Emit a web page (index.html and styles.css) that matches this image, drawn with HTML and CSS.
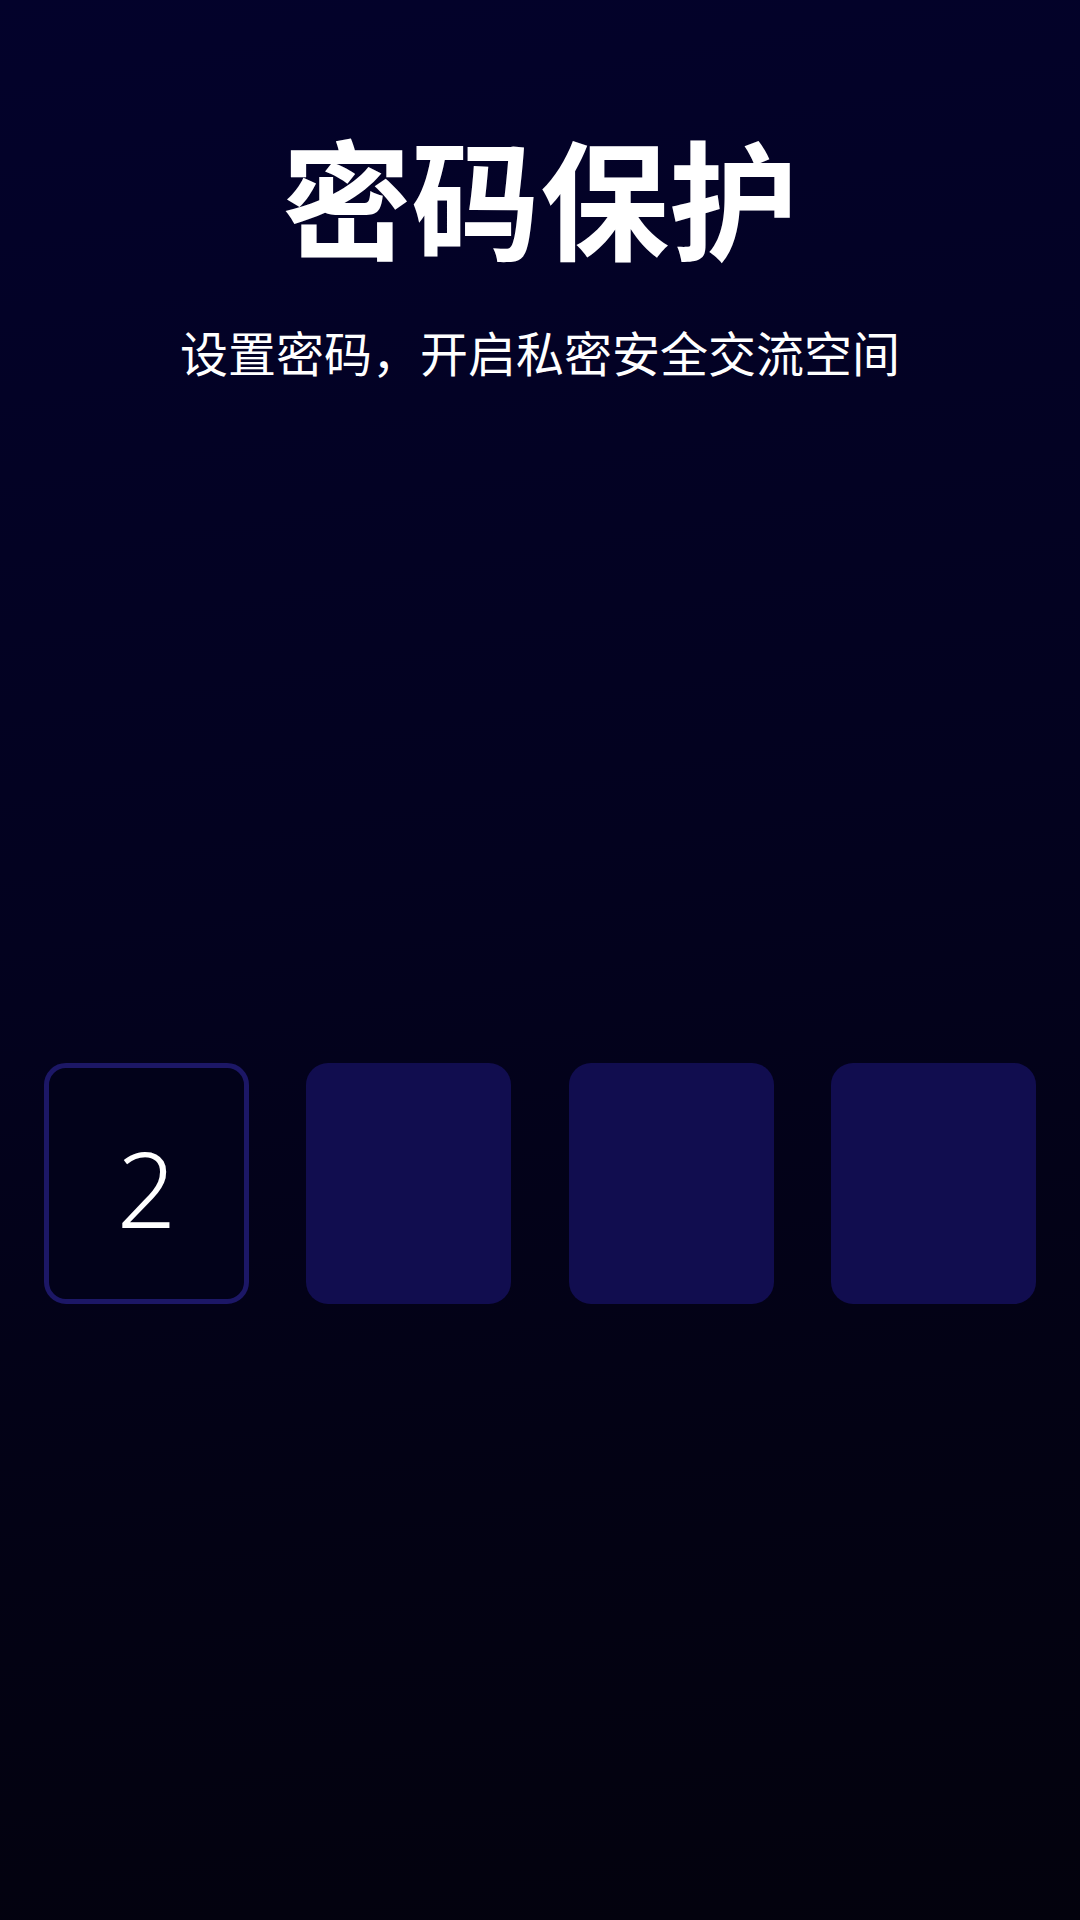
FILE: index.html
```html
<!DOCTYPE html>
<html lang="zh-CN">
<head>
<meta charset="utf-8">
<title>密码保护</title>
<link rel="stylesheet" href="styles.css">
</head>
<body>
<main class="page">
  <header class="intro">
    <h1 class="title">密码保护</h1>
    <p class="subtitle">设置密码，开启私密安全交流空间</p>
  </header>
  <div class="code-row">
    <div class="cell cell-active"><span class="digit">2</span></div>
    <div class="cell cell-empty"></div>
    <div class="cell cell-empty"></div>
    <div class="cell cell-empty"></div>
  </div>
</main>
</body>
</html>
```
FILE: styles.css
```css
html, body {
  margin: 0;
  padding: 0;
}
body {
  width: 1080px;
  height: 1920px;
  background: linear-gradient(170deg, #03022b 0%, #03021f 45%, #030214 75%, #03020d 100%);
  font-family: "Noto Sans CJK SC", "Noto Sans", sans-serif;
  color: #ffffff;
  overflow: hidden;
}
.page {
  display: flex;
  flex-direction: column;
  align-items: stretch;
}
.intro {
  display: flex;
  flex-direction: column;
  align-items: center;
  padding-top: 118px;
}
.title {
  margin: 0;
  font-size: 129px;
  line-height: 154px;
  font-weight: 700;
  letter-spacing: 0;
}
.subtitle {
  margin: 46px 0 0;
  font-size: 48px;
  line-height: 67px;
  font-weight: 400;
}
.code-row {
  display: flex;
  justify-content: space-between;
  padding: 0 44px;
  margin-top: 678px;
}
.cell {
  box-sizing: border-box;
  width: 205px;
  height: 241px;
  border-radius: 22px;
  display: flex;
  align-items: center;
  justify-content: center;
}
.cell-active {
  border: 5px solid #1c1766;
  background: #02021a;
}
.cell-empty {
  background: #110d4f;
}
.digit {
  font-family: "Noto Sans", sans-serif;
  font-weight: 350;
  font-size: 104px;
  line-height: 1;
  color: #ffffff;
  padding-top: 8px;
}
```
